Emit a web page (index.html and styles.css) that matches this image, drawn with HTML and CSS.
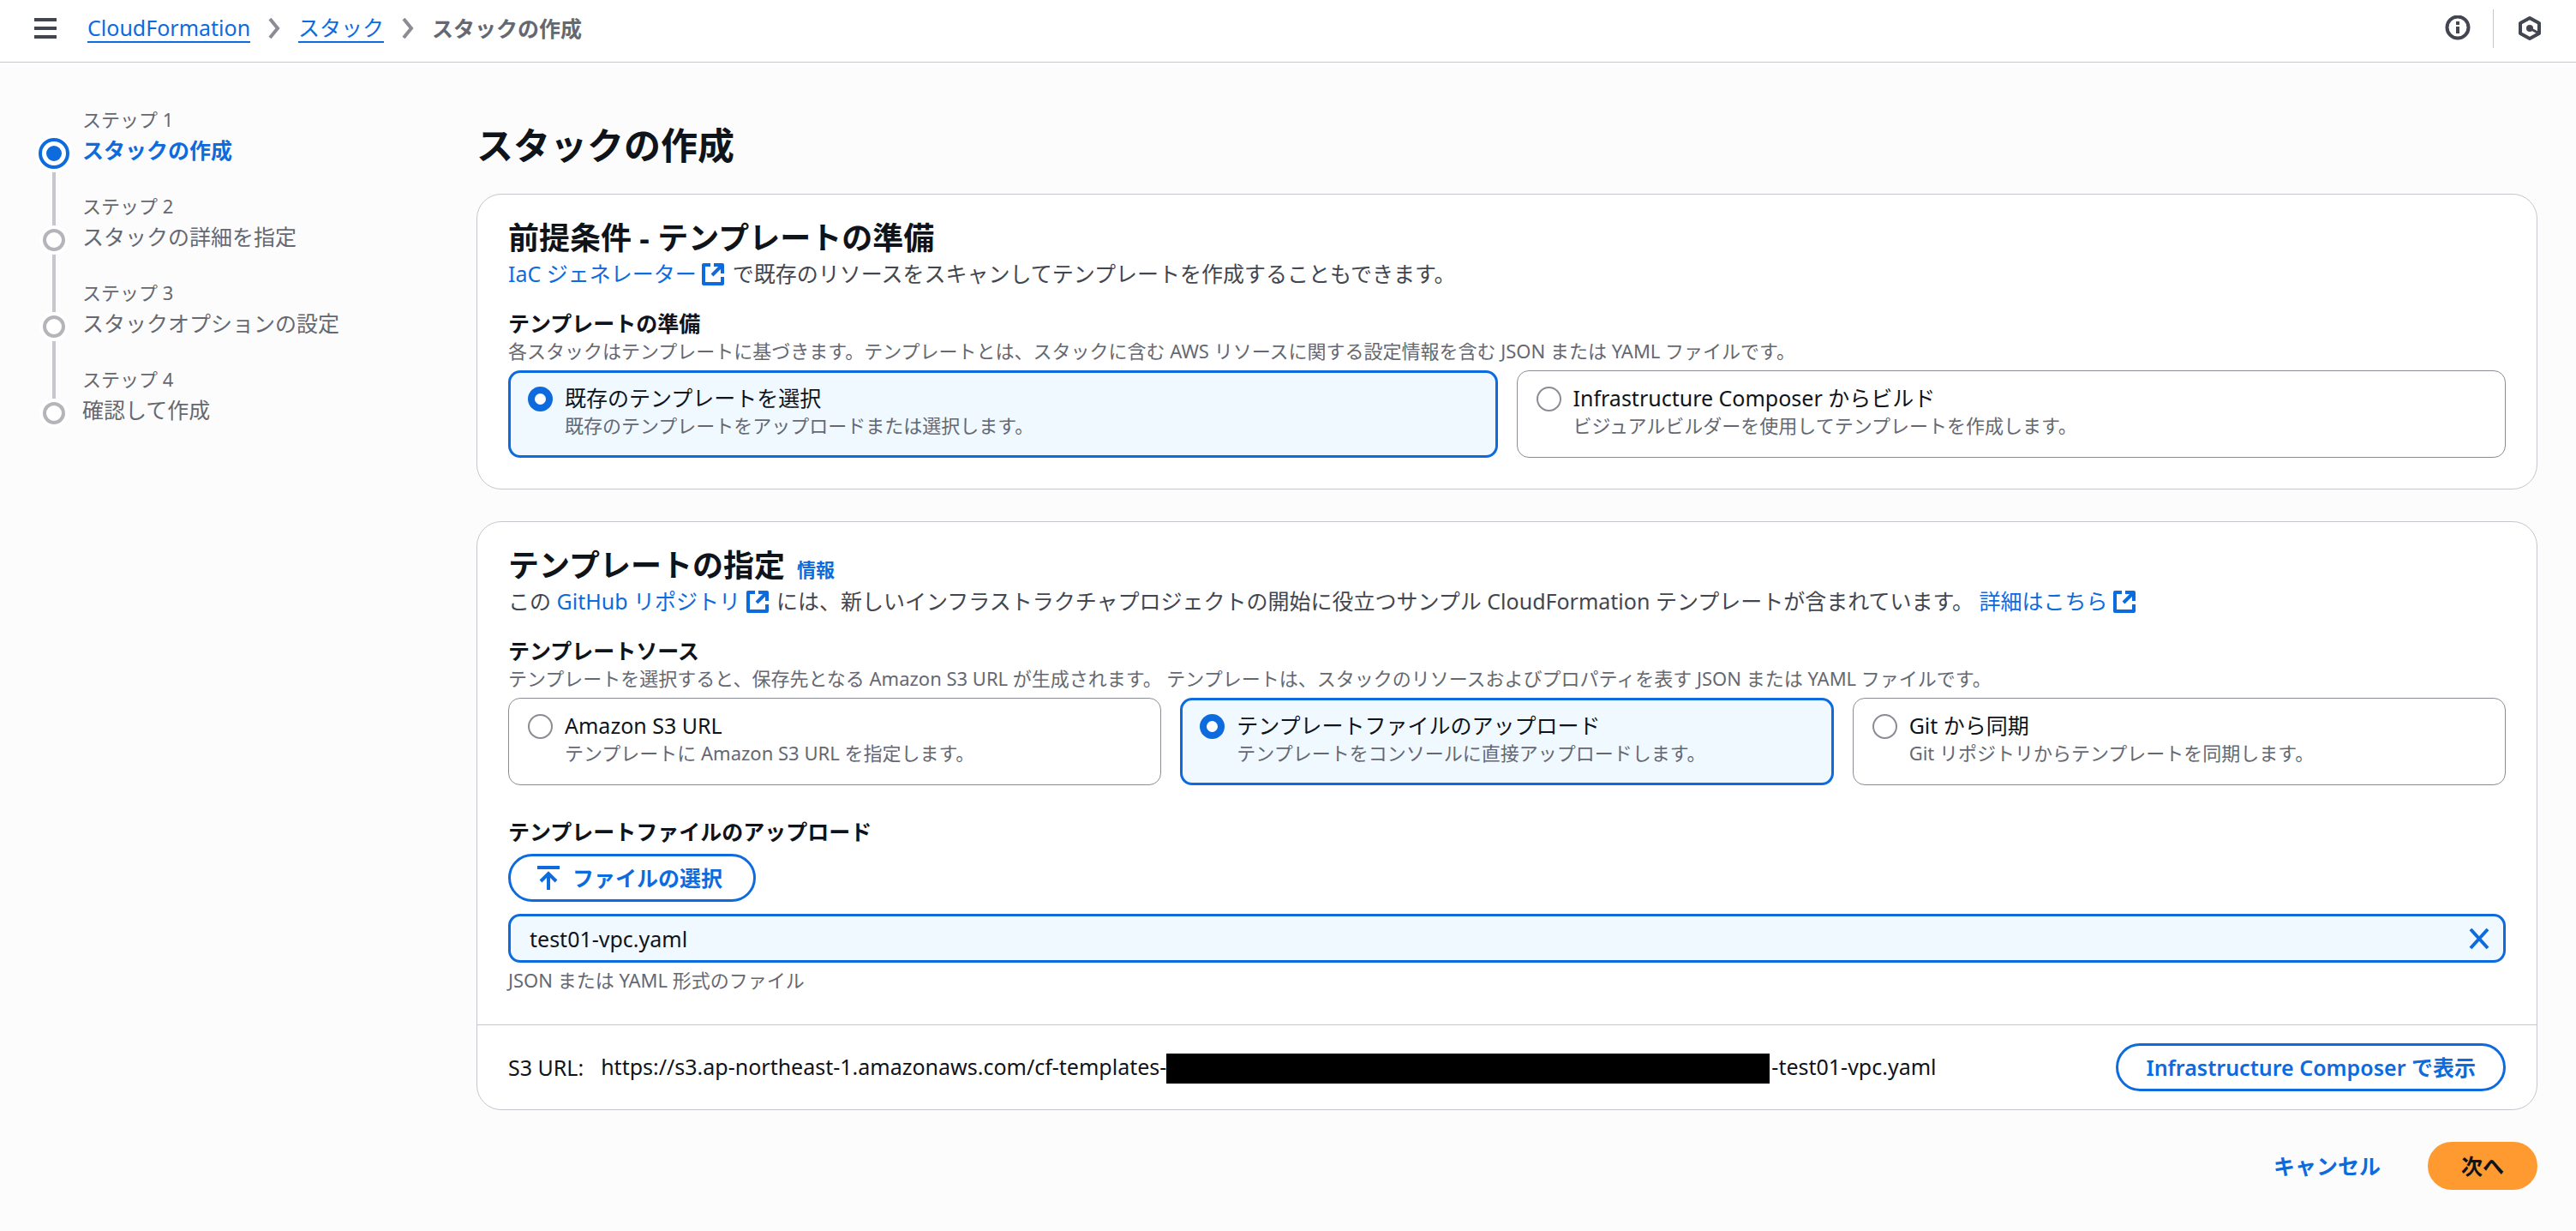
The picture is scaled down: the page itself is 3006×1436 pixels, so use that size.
FILE: index.html
```html
<!DOCTYPE html>
<html lang="ja">
<head>
    <meta charset="UTF-8">
    <meta name="viewport" content="width=device-width, initial-scale=1.0">
    <title>スタックの作成</title>
    <link rel="stylesheet" href="styles.css">
</head>
<body>
    <svg class="sprite" width="0" height="0" aria-hidden="true">
        <symbol id="external" viewBox="0 0 26 26">
            <path d="M10 2H2v22h22v-8M14 2h10v10M23 3L12 14" fill="none" stroke="currentColor" stroke-width="4" stroke-linejoin="round"/>
        </symbol>
        <symbol id="chevron" viewBox="0 0 14 24">
            <path d="M2 1l9 11-9 11" fill="none" stroke="currentColor" stroke-width="4"/>
        </symbol>
    </svg>

    <header class="topbar">
        <button class="icon-button" type="button" aria-label="メニュー">
            <svg width="26" height="24" viewBox="0 0 26 24"><path d="M0 2h26M0 12h26M0 22h26" stroke="currentColor" stroke-width="4"/></svg>
        </button>
        <nav class="breadcrumbs">
            <a href="#">CloudFormation</a>
            <svg class="chevron"><use href="#chevron"/></svg>
            <a href="#">スタック</a>
            <svg class="chevron"><use href="#chevron"/></svg>
            <span class="current">スタックの作成</span>
        </nav>
        <div class="tools">
            <button class="icon-button" type="button" aria-label="情報パネル">
                <svg width="30" height="30" viewBox="0 0 30 30"><circle cx="15" cy="14" r="12.5" fill="none" stroke="currentColor" stroke-width="4"/><path d="M15 7v4M15 13v8" stroke="currentColor" stroke-width="4"/></svg>
            </button>
            <button class="icon-button hex" type="button" aria-label="ツール">
                <svg width="28" height="30" viewBox="0 0 28 30"><path d="M14 3l11 6v12l-11 6-11-6V9z" fill="none" stroke="currentColor" stroke-width="4" stroke-linejoin="round"/><circle cx="14" cy="15" r="4" fill="currentColor"/><path d="M14 15l11 6" stroke="currentColor" stroke-width="3"/></svg>
            </button>
        </div>
    </header>

    <div class="layout">
        <nav class="wizard">
            <ol class="steps">
                <li class="step active">
                    <span class="dot"></span>
                    <span class="step-label">ステップ 1</span>
                    <span class="step-name">スタックの作成</span>
                </li>
                <li class="step">
                    <span class="dot"></span>
                    <span class="step-label">ステップ 2</span>
                    <span class="step-name">スタックの詳細を指定</span>
                </li>
                <li class="step">
                    <span class="dot"></span>
                    <span class="step-label">ステップ 3</span>
                    <span class="step-name">スタックオプションの設定</span>
                </li>
                <li class="step">
                    <span class="dot"></span>
                    <span class="step-label">ステップ 4</span>
                    <span class="step-name">確認して作成</span>
                </li>
            </ol>
        </nav>

        <main class="content">
            <h1>スタックの作成</h1>

            <section class="card">
                <div class="card-body">
                    <h2>前提条件 - テンプレートの準備</h2>
                    <p class="description"><a href="#">IaC ジェネレーター <svg class="external"><use href="#external"/></svg></a> で既存のリソースをスキャンしてテンプレートを作成することもできます。</p>

                    <div class="field" role="radiogroup" aria-labelledby="prepare-label">
                        <div class="field-label" id="prepare-label">テンプレートの準備</div>
                        <div class="hint">各スタックはテンプレートに基づきます。テンプレートとは、スタックに含む AWS リソースに関する設定情報を含む JSON または YAML ファイルです。</div>
                        <div class="tiles">
                            <label class="tile selected">
                                <input type="radio" name="prepare" checked>
                                <span class="tile-text">
                                    <span class="tile-title">既存のテンプレートを選択</span>
                                    <span class="hint">既存のテンプレートをアップロードまたは選択します。</span>
                                </span>
                            </label>
                            <label class="tile">
                                <input type="radio" name="prepare">
                                <span class="tile-text">
                                    <span class="tile-title">Infrastructure Composer からビルド</span>
                                    <span class="hint">ビジュアルビルダーを使用してテンプレートを作成します。</span>
                                </span>
                            </label>
                        </div>
                    </div>
                </div>
            </section>

            <section class="card">
                <div class="card-body">
                    <h2>テンプレートの指定<a class="info" href="#">情報</a></h2>
                    <p class="description">この <a href="#">GitHub リポジトリ <svg class="external"><use href="#external"/></svg></a> には、新しいインフラストラクチャプロジェクトの開始に役立つサンプル CloudFormation テンプレートが含まれています。 <a href="#">詳細はこちら <svg class="external"><use href="#external"/></svg></a></p>

                    <div class="field" role="radiogroup" aria-labelledby="source-label">
                        <div class="field-label" id="source-label">テンプレートソース</div>
                        <div class="hint">テンプレートを選択すると、保存先となる Amazon S3 URL が生成されます。 テンプレートは、スタックのリソースおよびプロパティを表す JSON または YAML ファイルです。</div>
                        <div class="tiles">
                            <label class="tile">
                                <input type="radio" name="source">
                                <span class="tile-text">
                                    <span class="tile-title">Amazon S3 URL</span>
                                    <span class="hint">テンプレートに Amazon S3 URL を指定します。</span>
                                </span>
                            </label>
                            <label class="tile selected">
                                <input type="radio" name="source" checked>
                                <span class="tile-text">
                                    <span class="tile-title">テンプレートファイルのアップロード</span>
                                    <span class="hint">テンプレートをコンソールに直接アップロードします。</span>
                                </span>
                            </label>
                            <label class="tile">
                                <input type="radio" name="source">
                                <span class="tile-text">
                                    <span class="tile-title">Git から同期</span>
                                    <span class="hint">Git リポジトリからテンプレートを同期します。</span>
                                </span>
                            </label>
                        </div>
                    </div>

                    <div class="upload">
                        <div class="field-label">テンプレートファイルのアップロード</div>
                        <button class="btn with-icon" type="button">
                            <svg width="28" height="28" viewBox="0 0 28 28"><path d="M1 2h26M14 28V11M5 18l9-9 9 9" fill="none" stroke="currentColor" stroke-width="4"/></svg>
                            ファイルの選択
                        </button>
                        <div class="file">
                            <span>test01-vpc.yaml</span>
                            <button class="dismiss" type="button" aria-label="ファイルを削除">
                                <svg width="24" height="26" viewBox="0 0 24 26"><path d="M2 2l20 22M22 2L2 24" stroke="currentColor" stroke-width="4"/></svg>
                            </button>
                        </div>
                        <div class="hint">JSON または YAML 形式のファイル</div>
                    </div>
                </div>
                <div class="card-footer">
                    <span class="s3-label">S3 URL:</span>
                    <span class="url">https://s3.ap-northeast-1.amazonaws.com/cf-templates-<span class="redacted"></span>-test01-vpc.yaml</span>
                    <button class="btn" type="button">Infrastructure Composer で表示</button>
                </div>
            </section>

            <div class="actions">
                <button class="btn link" type="button">キャンセル</button>
                <button class="btn primary" type="submit">次へ</button>
            </div>
        </main>
    </div>
</body>
</html>
```
FILE: styles.css
```css
* {
    box-sizing: border-box;
}

body {
    margin: 0;
    background: #fcfcfd;
    color: #0f141a;
    font-family: "Noto Sans", "Noto Sans CJK JP", sans-serif;
    font-size: 25px;
    line-height: 36px;
}

a {
    color: #0d6bde;
    text-decoration: none;
}

button {
    font: inherit;
    cursor: pointer;
}

.sprite {
    position: absolute;
}

/* top bar */
.topbar {
    display: flex;
    align-items: center;
    height: 73px;
    padding: 0 40px 6px;
    background: #fff;
    border-bottom: 1px solid #c6c6cd;
}

.icon-button {
    display: flex;
    padding: 0;
    border: 0;
    background: none;
    color: #424650;
}

.breadcrumbs {
    display: flex;
    align-items: center;
    gap: 21px;
    margin-left: 36px;
}

.breadcrumbs a {
    border-bottom: 2px solid #0d6bde;
    line-height: 32px;
}

.chevron {
    width: 14px;
    height: 24px;
    color: #8c8c94;
}

.current {
    color: #656871;
    font-weight: 700;
}

.tools {
    display: flex;
    align-items: center;
    margin-left: auto;
}

.hex {
    align-items: center;
    height: 45px;
    margin-left: 26px;
    padding-left: 28px;
    border-left: 1px solid #c6c6cd;
}

/* page */
.layout {
    display: flex;
    padding: 0 45px 0 44px;
}

.wizard {
    flex: 0 0 512px;
    padding-top: 48px;
}

.steps {
    margin: 0;
    padding: 0;
    list-style: none;
}

.step {
    position: relative;
    display: flex;
    flex-direction: column;
    padding: 0 0 29px 52px;
    color: #656871;
}

.step-label {
    font-size: 22px;
}

/* line to the next step */
.step:not(:last-child)::after {
    content: "";
    position: absolute;
    left: 17px;
    top: 74px;
    bottom: -42px;
    width: 4px;
    background: #c6c6cd;
}

.dot {
    position: absolute;
    left: 6px;
    top: 45px;
    z-index: 1;
    width: 26px;
    height: 26px;
    border: 4px solid #b4b4bb;
    border-radius: 50%;
    background: #fff;
    box-shadow: 0 0 0 4px #fff;
}

.active .dot {
    left: 1px;
    top: 40px;
    width: 36px;
    height: 36px;
    border-color: #0d6bde;
}

.active .dot::before {
    content: "";
    position: absolute;
    inset: 5px;
    border-radius: 50%;
    background: #0d6bde;
}

.active .step-name {
    color: #0d6bde;
    font-weight: 700;
}

.content {
    flex: 1;
    min-width: 0;
    padding: 70px 0 46px;
}

h1 {
    margin: 0 0 29px;
    font-size: 43px;
    line-height: 54px;
}

h2 {
    margin: 0 0 1px;
    font-size: 36px;
    line-height: 44px;
}

.info {
    margin-left: 14px;
    font-size: 22px;
    line-height: 22px;
}

/* cards */
.card {
    margin-bottom: 37px;
    background: #fff;
    border: 1px solid #c6c6cd;
    border-radius: 29px;
}

.card-body {
    padding: 29px 36px 36px;
}

.description {
    margin: 0;
    color: #424650;
}

.external {
    width: 26px;
    height: 26px;
    margin-right: 3px;
    vertical-align: -4px;
}

.field {
    margin-top: 22px;
}

.field-label {
    font-weight: 700;
}

.hint {
    color: #656871;
    font-size: 22px;
    line-height: 28px;
}

.tiles {
    display: flex;
    gap: 22px;
    margin-top: 9px;
}

.tile {
    display: flex;
    flex: 1;
    gap: 14px;
    min-height: 102px;
    padding: 13px 22px;
    border: 1px solid #8c8c94;
    border-radius: 14px;
    cursor: pointer;
}

.tile.selected {
    padding: 11px 20px;
    border: 3px solid #0d6bde;
    background: #f0f9ff;
}

.tile input {
    appearance: none;
    flex: none;
    width: 29px;
    height: 29px;
    margin: 5px 0 0;
    border: 2px solid #8c8c94;
    border-radius: 50%;
    background: #fff;
}

.tile input:checked {
    border: 8px solid #0d6bde;
}

.tile-text {
    display: flex;
    flex-direction: column;
}

/* upload */
.upload {
    margin-top: 36px;
}

.btn {
    height: 56px;
    padding: 0 32px;
    border: 3px solid #0d6bde;
    border-radius: 28px;
    background: #fff;
    color: #0d6bde;
    font-weight: 600;
}

.with-icon {
    display: flex;
    align-items: center;
    gap: 14px;
    margin-top: 8px;
    padding: 0 36px 0 30px;
}

.file {
    display: flex;
    align-items: center;
    justify-content: space-between;
    height: 57px;
    margin: 14px 0 6px;
    padding: 0 16px 0 22px;
    border: 3px solid #0d6bde;
    border-radius: 14px;
    background: #f0f9ff;
}

.dismiss {
    display: flex;
    padding: 0;
    border: 0;
    background: none;
    color: #0d6bde;
}

.card-footer {
    display: flex;
    align-items: center;
    margin-top: 2px;
    padding: 21px 36px;
    border-top: 1px solid #c6c6cd;
}

.url {
    margin: 0 auto 0 20px;
}

.redacted {
    display: inline-block;
    width: 704px;
    height: 35px;
    margin-right: 2px;
    background: #000;
    vertical-align: middle;
}

.actions {
    display: flex;
    justify-content: flex-end;
    gap: 18px;
}

.link {
    padding: 0 34px;
    border-color: transparent;
    background: none;
}

.primary {
    padding: 0 36px;
    border-color: #ff9a30;
    background: #ff9a30;
    color: #0f141a;
}
```
